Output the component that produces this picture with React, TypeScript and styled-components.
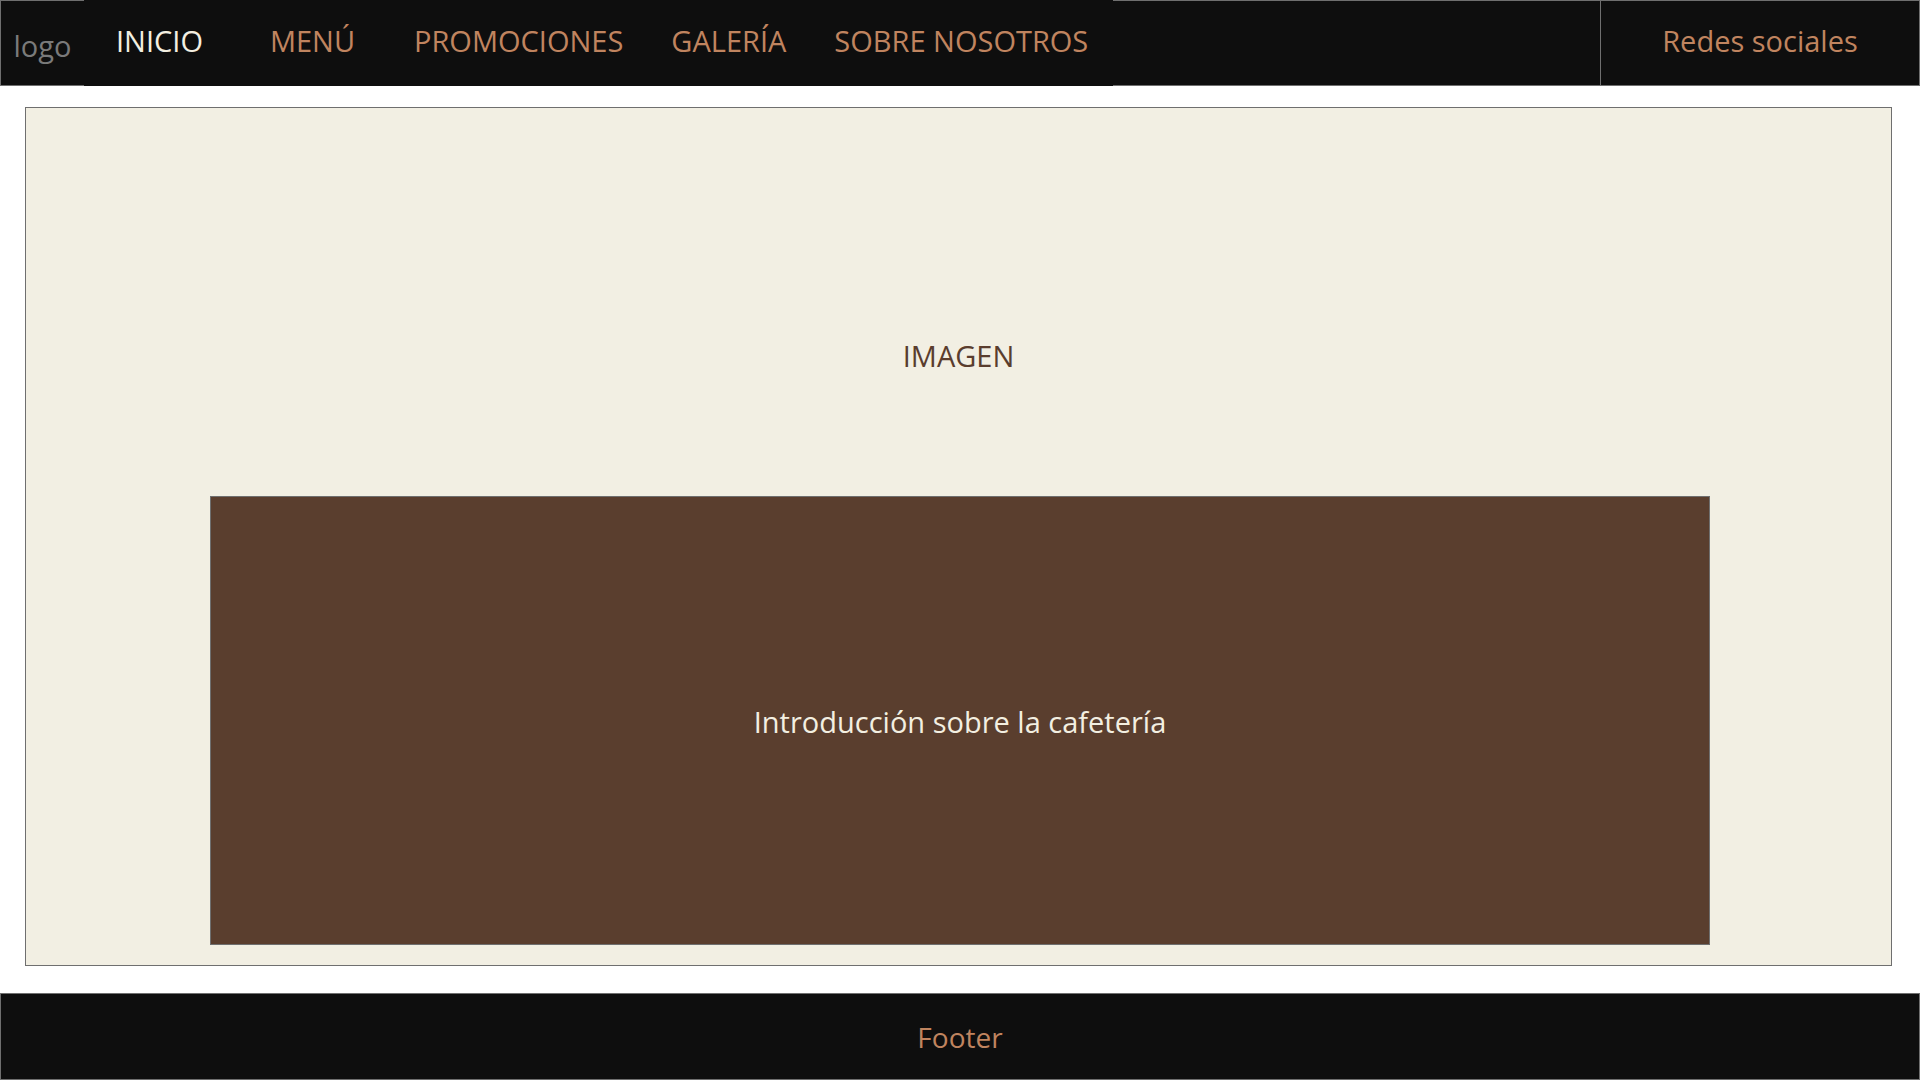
import styled, { createGlobalStyle } from "styled-components";

const GlobalStyle = createGlobalStyle`
  * {
    box-sizing: border-box;
  }
  body {
    margin: 0;
    background: #ffffff;
    font-family: "Open Sans", "Noto Sans", sans-serif;
  }
`;

const Page = styled.div`
  width: 1920px;
  height: 1080px;
  display: flex;
  flex-direction: column;
  overflow: hidden;
`;

const Header = styled.header`
  display: flex;
  height: 86px;
  background: #0e0e0e;
  flex-shrink: 0;
`;

const Logo = styled.div`
  width: 84px;
  display: flex;
  align-items: center;
  justify-content: center;
  padding-top: 4px;
  border: 1px solid #6f6f6f;
  border-right: none;
  color: #7a7a7a;
  font-size: 29px;
`;

const Nav = styled.ul`
  display: flex;
  margin: 0;
  padding: 0 1px 0 0;
  list-style: none;
`;

const NavItem = styled.li<{ $active?: boolean; $min?: number }>`
  display: flex;
  align-items: center;
  justify-content: center;
  min-width: ${(p) => (p.$min ? `${p.$min}px` : "auto")};
  padding: 0 24px 5px;
  font-size: 29px;
  color: ${(p) => (p.$active ? "#f3efe1" : "#c0845f")};
  cursor: pointer;
`;

const Spacer = styled.div`
  flex: 1;
  border-top: 1px solid #6f6f6f;
  border-bottom: 1px solid #6f6f6f;
`;

const Social = styled.div`
  width: 320px;
  display: flex;
  align-items: center;
  justify-content: center;
  padding-bottom: 5px;
  border: 1px solid #6f6f6f;
  color: #c0845f;
  font-size: 29px;
`;

const Main = styled.main`
  margin: 21px 28px 27px 25px;
  height: 859px;
  display: flex;
  flex-direction: column;
  background: #f2efe3;
  border: 1px solid #6f6f6f;
  padding-top: 228px;
`;

const ImageLabel = styled.div`
  text-align: center;
  line-height: 40px;
  font-size: 29px;
  color: #5a3d2e;
`;

const Intro = styled.section`
  margin: auto 0 20px 184px;
  width: 1500px;
  height: 449px;
  display: flex;
  align-items: center;
  justify-content: center;
  padding-top: 2px;
  background: #5a3e2e;
  border: 1px solid #6f6f6f;
  color: #f3efe1;
  font-size: 29px;
`;

const Footer = styled.footer`
  flex: 1;
  display: flex;
  align-items: center;
  justify-content: center;
  background: #0e0e0e;
  border: 1px solid #6f6f6f;
  color: #c0845f;
  font-size: 28px;
`;

const links = [
  { label: "INICIO", min: 151, active: true },
  { label: "MENÚ", min: 155 },
  { label: "PROMOCIONES" },
  { label: "GALERÍA" },
  { label: "SOBRE NOSOTROS" },
];

export default function App() {
  return (
    <Page>
      <GlobalStyle />
      <Header>
        <Logo>logo</Logo>
        <Nav>
          {links.map((l) => (
            <NavItem key={l.label} $active={l.active} $min={l.min}>
              {l.label}
            </NavItem>
          ))}
        </Nav>
        <Spacer />
        <Social>Redes sociales</Social>
      </Header>
      <Main>
        <ImageLabel>IMAGEN</ImageLabel>
        <Intro>Introducción sobre la cafetería</Intro>
      </Main>
      <Footer>Footer</Footer>
    </Page>
  );
}
